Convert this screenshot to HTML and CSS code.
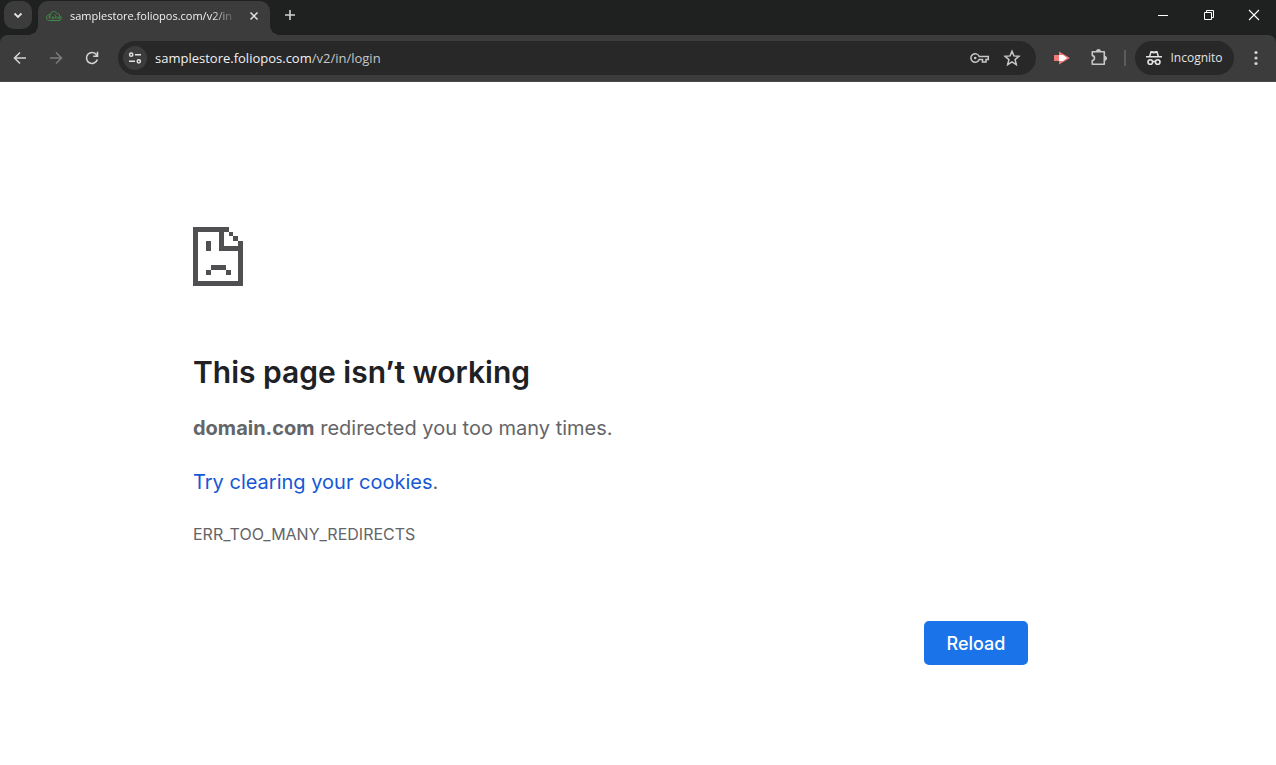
FILE: index.html
```html
<!DOCTYPE html>
<html lang="en">
<head>
<meta charset="utf-8">
<title>samplestore.foliopos.com/v2/in/login</title>
<link rel="stylesheet" href="styles.css">
</head>
<body>
<header class="browser">
  <div class="tabstrip">
    <button class="tab-search" aria-label="Search tabs"><svg width="28" height="28" viewBox="0 0 28 28"><path d="M10.500 12.500 14 16l3.500-3.500" fill="none" stroke="#e3e3e3" stroke-width="1.800"/></svg></button>
    <div class="tab">
      <svg class="favicon" width="16" height="16" viewBox="0 0 16 16" fill="none" stroke="#3f8f47"><path d="M3.500 12.500h9.500a2.300 2.300 0 0 0 .7-4.500C13.500 6 12 5.300 10.800 5.500 9.800 3 5.500 2.500 4.600 6.300 2 6.500.5 8 .6 10c.1 1.500 1.200 2.500 2.900 2.500z"/><path d="M3.500 11V8q0-1 1.500-1M2.500 8.800H5M6 9h1.500v1.700H6zM9.300 6.500V11M11 8v3M12.500 9h1.300v1.700h-1.300z" stroke-width=".8"/></svg>
      <span class="tab-title">samplestore.foliopos.com/v2/in</span>
      <button class="tab-close" aria-label="Close tab"><svg width="16" height="16" viewBox="0 0 16 16"><path d="m4.500 4.500 7 7m0-7-7 7" stroke="#e3e3e3" stroke-width="1.500"/></svg></button>
    </div>
    <button class="new-tab" aria-label="New tab"><svg width="16" height="16" viewBox="0 0 16 16"><path d="M8 3v10M3 8h10" stroke="#d0d0d0" stroke-width="1.600"/></svg></button>
    <div class="window-controls">
      <button aria-label="Minimize"><svg width="12" height="12" viewBox="0 0 12 12"><path d="M1 6.500h10" stroke="#fff"/></svg></button>
      <button aria-label="Restore"><svg width="12" height="12" viewBox="0 0 12 12" fill="none" stroke="#fff"><path d="M1.500 3.500h7v7h-7zM3.500 3.500v-2h7v7h-2"/></svg></button>
      <button aria-label="Close"><svg width="12" height="12" viewBox="0 0 12 12"><path d="m1 1 10 10M11 1 1 11" stroke="#fff" stroke-width="1.100"/></svg></button>
    </div>
  </div>
  <div class="toolbar">
    <nav class="nav">
      <button aria-label="Back"><svg width="16" height="16" viewBox="0 0 16 16" fill="none" stroke="#d2d2d2" stroke-width="1.600"><path d="M14 8H3M8 2.500 2.500 8 8 13.500"/></svg></button>
      <button aria-label="Forward" disabled><svg width="16" height="16" viewBox="0 0 16 16" fill="none" stroke="#7b7b7b" stroke-width="1.600"><path d="M2 8h11M8 2.500 13.500 8 8 13.500"/></svg></button>
      <button aria-label="Reload page"><svg width="16" height="16" viewBox="0 0 16 16" fill="none" stroke="#d2d2d2" stroke-width="1.600"><path d="M13.300 9.500A5.500 5.500 0 1 1 12.500 4.800L13.300 6M13.500 1.800V6.200H9.200"/></svg></button>
    </nav>
    <div class="omnibox">
      <button class="site-info" aria-label="Site information"><svg width="14" height="14" viewBox="0 0 14 14" fill="none" stroke="#e3e3e3" stroke-width="1.500"><circle cx="3.200" cy="3.700" r="1.600"/><path d="M7 3.700h6M1 10.300h6"/><circle cx="10.800" cy="10.300" r="1.600"/></svg></button>
      <a class="url" href="#">samplestore.foliopos.com<span class="path">/v2/in/login</span></a>
      <button class="key" aria-label="Passwords"><svg width="20" height="14" viewBox="0 0 20 14" fill="none" stroke="#c7c7c7" stroke-width="1.500"><path d="M9.200 5.500A4.300 4.300 0 1 0 9.200 8.500H12.500V11H16V8.500H18.300V5.500z"/><circle cx="5.200" cy="7" r="1.300" fill="#c7c7c7" stroke="none"/></svg></button>
      <button class="star" aria-label="Bookmark"><svg width="18" height="18" viewBox="0 0 18 18"><path d="m9 2.200 1.900 4.700 5 .4-3.800 3.300 1.200 5L9 12.900l-4.300 2.700 1.200-5L2.100 7.300l5-.4z" fill="none" stroke="#c7c7c7" stroke-width="1.500"/></svg></button>
    </div>
    <div class="extensions">
      <button aria-label="Extension"><svg width="18" height="18" viewBox="0 0 18 18"><path d="M1 6h5V2.500L17 9 6 15.500V12H1z" fill="#f27b78"/><path d="M6 6h4l4 3-4 3H6z" fill="#fff"/></svg></button>
      <button aria-label="Extensions"><svg width="20" height="20" viewBox="0 0 20 20" fill="none" stroke="#c7c7c7" stroke-width="1.600"><path d="M3.300 3.800H15.300V16.300H3.300V12.500C6.200 12.200 6.200 8 3.300 7.600z" stroke-linejoin="round"/><path d="M7.800 3.500a1.700 1.700 0 0 1 3.400 0M15.500 8.500a1.700 1.700 0 0 1 0 3.400" fill="#c7c7c7"/></svg></button>
    </div>
    <span class="divider"></span>
    <button class="incognito"><svg width="16" height="16" viewBox="0 0 16 16"><path d="M4.500 1h1.800L8 1.500 9.700 1h1.800l1.500 5H16v1.600H0V6h3z" fill="#e3e3e3"/><path d="m5.400 3-.8 3h6.800l-.8-3-2.600.5z" fill="#282828"/><g fill="none" stroke="#e3e3e3" stroke-width="1.600"><circle cx="4.300" cy="12" r="2.300"/><circle cx="11.700" cy="12" r="2.300"/><path d="M6.500 11.500h3"/></g></svg><span>Incognito</span></button>
    <button class="menu" aria-label="Menu"><svg width="4" height="16" viewBox="0 0 4 16" fill="#d2d2d2"><circle cx="2" cy="2.500" r="1.600"/><circle cx="2" cy="8" r="1.600"/><circle cx="2" cy="13.500" r="1.600"/></svg></button>
  </div>
</header>
<main class="error">
  <svg class="sad-page" width="50" height="59" viewBox="0 0 50 59" fill="#505053" shape-rendering="crispEdges"><path d="M0 0H36V5H31V19H45V14H50V59H0zM5 5V54H45V24H26V5z" fill-rule="evenodd"/><path d="M36 5h4v4h-4zM40 9h5v5h-5zM13 14h5v10h-5zM18 38h15v5H18zM13 43h5v5h-5zM33 43h5v5h-5z"/></svg>
  <h1>This page isn’t working</h1>
  <p class="message"><strong>domain.com</strong> redirected you too many times.</p>
  <p class="message"><a href="#">Try clearing your cookies</a>.</p>
  <p class="code">ERR_TOO_MANY_REDIRECTS</p>
  <button class="reload">Reload</button>
</main>
</body>
</html>
```
FILE: styles.css
```css
* { box-sizing: border-box; }
body { margin: 0; background: #fff; font-family: Inter, "Liberation Sans", sans-serif; }
button { margin: 0; padding: 0; border: 0; background: none; font: inherit; color: inherit; }
svg { display: block; flex: none; }

.browser { background: #1f2020; color: #e3e3e3; font-family: "Open Sans", "Noto Sans", sans-serif; }
.browser button { display: flex; align-items: center; justify-content: center; flex: none; }
.tabstrip { display: flex; height: 35px; padding-left: 4px; }
.browser .tab-search { width: 28px; height: 28px; margin: 1px 6px 0 0; border-radius: 10px; background: #3c3c3c; }
.tab { position: relative; display: flex; align-items: center; width: 232px; margin-top: 1px; padding: 0 8px; padding-bottom: 4px; border-radius: 10px 10px 0 0; background: #3c3c3c; }
.tab::before, .tab::after { content: ""; position: absolute; bottom: 0; width: 10px; height: 10px; }
.tab::before { right: 100%; background: radial-gradient(circle at 0 0, transparent 10px, #3c3c3c 10px); }
.tab::after { left: 100%; background: radial-gradient(circle at 100% 0, transparent 10px, #3c3c3c 10px); }
.tab-title { flex: 1; min-width: 0; margin: 0 8px; white-space: nowrap; color: #f1f1f1; font-size: 11px; line-height: 18px; mask-image: linear-gradient(to right, #000 84%, transparent); }
.browser .new-tab { width: 16px; height: 28px; margin: 1px 0 0 12px; }
.window-controls { display: flex; margin-left: auto; }
.window-controls button { width: 46px; height: 30px; }
.window-controls button:last-child { width: 44px; }

.toolbar { display: flex; align-items: center; height: 47px; background: #3c3c3c; border-bottom: 1px solid #4a4a4a; border-radius: 8px 8px 0 0; }
.nav { display: flex; gap: 20px; padding: 0 18px 0 12px; }
.omnibox { display: flex; align-items: center; flex: 1; min-width: 0; height: 34px; padding: 0 15px 0 5px; border-radius: 17px; background: #282828; }
.browser .site-info { width: 24px; height: 24px; border-radius: 50%; background: #3c3c3c; }
.url { flex: 1; margin-left: 8px; color: #f1f1f1; font-size: 13px; line-height: 20px; text-decoration: none; white-space: nowrap; }
.path { color: #c7c7c7; }
.browser .star { margin-left: 13px; }
.extensions { display: flex; align-items: center; gap: 18px; padding: 0 15px 0 17px; }
.divider { width: 2px; height: 16px; margin-right: 9px; background: #5c5c5c; }
.browser .incognito { gap: 8px; height: 34px; width: 99px; border-radius: 17px; background: #282828; font-size: 12px; line-height: 18px; }
.browser .menu { width: 42px; height: 34px; padding-left: 2px; }

.error { display: flex; flex-direction: column; padding: 145px 248px 48px 193px; color: #646568; }
h1 { margin: 66px 0 0; color: #202124; font-size: 30px; line-height: 40px; font-weight: 600; }
.message { margin: 21px 0 0; font-size: 20px; line-height: 30px; }
.message + .message { margin-top: 24px; }
.message a { color: #1558d6; text-decoration: none; }
.code { margin: 25px 0 0; font-size: 16px; line-height: 24px; }
.reload { align-self: flex-end; width: 104px; height: 44px; margin-top: 75px; border-radius: 5px; background: #1a73e8; color: #fff; font-size: 18px; font-weight: 500; }
```
